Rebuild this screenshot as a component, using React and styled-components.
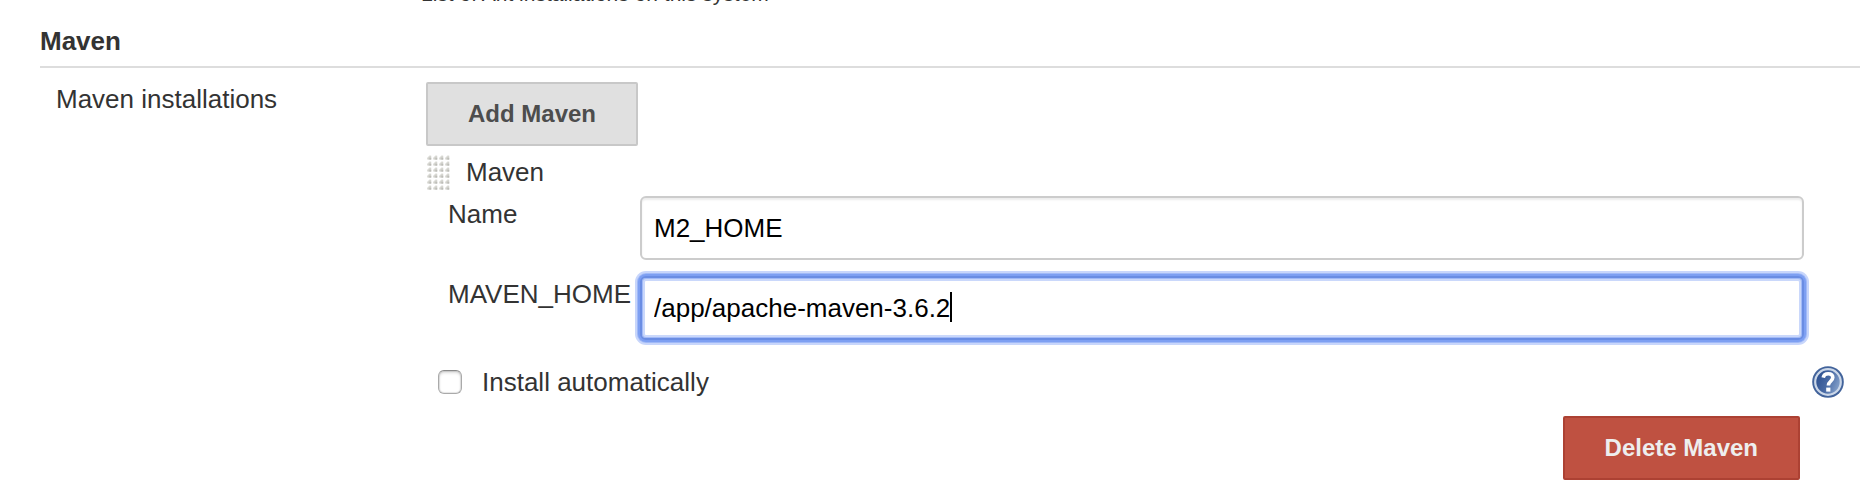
import React, { useLayoutEffect, useRef, useState } from 'react';
import styled, { createGlobalStyle, css } from 'styled-components';

const GlobalStyle = createGlobalStyle`
  * {
    box-sizing: border-box;
  }

  body {
    margin: 0;
    background-color: #fff;
    color: #333;
    font-family: "Liberation Sans", Arial, sans-serif;
    font-size: 26px;
    line-height: 30px;
    overflow-x: hidden;
  }
`;

const Page = styled.main`
  display: flow-root;
  padding: 0 0 20px 40px;
`;

/* Tail of the previous section, mostly scrolled out of view */
const Description = styled.p`
  margin: -18px 0 0 381px;
  font-size: 21px;
  line-height: 24px;
`;

const SectionTitle = styled.h2`
  margin: 20px 0 14px;
  padding-bottom: 10px;
  border-bottom: 2px solid #ddd;
  font-size: 26px;
  line-height: 30px;
`;

const Section = styled.div`
  display: grid;
  grid-template-columns: 370px minmax(0, 1fr);
  padding-left: 16px;
`;

const SectionLabel = styled.div`
  padding-top: 2px;
`;

const Button = styled.button`
  height: 64px;
  padding: 0 40px;
  border: 2px solid ${({ $danger }) => ($danger ? '#ac4133' : '#c8c8c8')};
  border-radius: 2px;
  background-color: ${({ $danger }) => ($danger ? '#bf5141' : '#e0e0e0')};
  color: ${({ $danger }) => ($danger ? '#eee' : '#4d4d4d')};
  font-family: inherit;
  font-size: 24px;
  font-weight: bold;
  cursor: pointer;
`;

const ItemHeader = styled.div`
  display: flex;
  align-items: center;
  gap: 16px;
  height: 36px;
  margin: 8px 0 6px;
`;

const Handle = styled.svg`
  display: block;
  width: 24px;
  height: 36px;
  cursor: move;
`;

const Fields = styled.div`
  display: flex;
  flex-direction: column;
  gap: 16px;
  padding: 0 56px 0 22px;
`;

const FieldRow = styled.div`
  display: grid;
  grid-template-columns: 192px minmax(0, 1fr);
`;

const Label = styled.label`
  padding-top: 3px;
`;

const InputWrap = styled.div`
  position: relative;
`;

const Input = styled.input`
  display: block;
  width: 100%;
  height: 64px;
  padding: 0 12px;
  border: 2px solid #ccc;
  border-radius: 6px;
  background-color: #fff;
  box-shadow: inset 0 2px 2px rgba(0, 0, 0, 0.075);
  color: #000;
  font-family: inherit;
  font-size: 26px;
  outline: none;

  ${({ $active }) =>
    $active &&
    css`
      border-color: #6a8de3;
      box-shadow: inset 0 0 0 1px #a2baf7, inset 0 0 0 3px #cad8fb, 0 0 0 2px #7d9ff2,
        0 0 0 3px #a0b9f7, 0 0 0 5px #c8d6fb;
      caret-color: transparent;
    `}
`;

const Caret = styled.span`
  position: absolute;
  top: 16px;
  width: 2px;
  height: 30px;
  background-color: #000;
  pointer-events: none;
`;

const OptionRow = styled.div`
  display: flex;
  align-items: center;
  justify-content: space-between;
  height: 32px;
  margin: 26px 16px 18px 12px;
`;

const OptionLabel = styled.label`
  display: flex;
  align-items: center;
  gap: 20px;
`;

const Checkbox = styled.input`
  appearance: none;
  width: 24px;
  height: 24px;
  margin: 0;
  border: 1px solid #aaa;
  border-top-color: #8a8a8a;
  border-radius: 6px;
  background-color: #fff;
  box-shadow: inset 0 2px 3px rgba(0, 0, 0, 0.14), inset 0 0 1px 1px rgba(0, 0, 0, 0.1);

  &:checked {
    background-color: #6a8de3;
  }
`;

const HelpLink = styled.a`
  display: block;
  width: 32px;
  height: 32px;

  svg {
    display: block;
  }
`;

const Actions = styled.div`
  display: flex;
  justify-content: flex-end;
  padding-right: 60px;
`;

const DragHandle = () => (
  <Handle viewBox="0 0 24 36" aria-hidden="true">
    <defs>
      <pattern id="grip" width="6" height="6" patternUnits="userSpaceOnUse">
        <path d="M1 5.6 L1 4 L3.4 1.6 L5.2 1.6 L5.2 5.6 Z" fill="#deded9" />
        <path d="M2.2 5.6 L2.2 4 L3.8 2.4 L5.2 2.4 L5.2 5.6 Z" fill="#cfcfca" />
        <path d="M3.4 4 H5.2 V5.6 H3.4 Z" fill="#bdbdb8" />
      </pattern>
    </defs>
    <rect width="24" height="36" fill="url(#grip)" />
  </Handle>
);

const HelpIcon = () => (
  <svg width="32" height="32" viewBox="0 0 32 32" aria-hidden="true">
    <defs>
      <linearGradient id="helpFill" x1="0" y1="0.3" x2="1" y2="0.7">
        <stop offset="0" stopColor="#2c4f8f" />
        <stop offset="0.5" stopColor="#4a6ba5" />
        <stop offset="1" stopColor="#8ba7cf" />
      </linearGradient>
    </defs>
    <circle cx="16" cy="16" r="15.8" fill="#42639b" />
    <circle cx="16" cy="16" r="12.8" fill="url(#helpFill)" stroke="#cbd7e8" strokeWidth="2.2" />
    <path
      d="M11.2 11.6 C11.8 8.6 13.8 7.8 16.2 7.8 C19 7.8 20.8 9.2 20.8 11.6 C20.8 15.2 16.4 15.4 16.4 19.4"
      fill="none"
      stroke="#fff"
      strokeWidth="3.6"
    />
    <rect x="14.2" y="21.6" width="4.2" height="4" fill="#fff" />
  </svg>
);

const TextField = ({ id, label, initialValue, active }) => {
  const [value, setValue] = useState(initialValue);
  const [caretLeft, setCaretLeft] = useState(0);
  const inputRef = useRef(null);

  // keep the caret right behind the last character
  useLayoutEffect(() => {
    const style = window.getComputedStyle(inputRef.current);
    const ctx = document.createElement('canvas').getContext('2d');
    ctx.font = `${style.fontSize} ${style.fontFamily}`;
    const start = parseInt(style.paddingLeft, 10) + parseInt(style.borderLeftWidth, 10);
    setCaretLeft(Math.round(start + ctx.measureText(value).width));
  }, [value]);

  return (
    <FieldRow>
      <Label htmlFor={id}>{label}</Label>
      <InputWrap>
        <Input
          ref={inputRef}
          id={id}
          type="text"
          value={value}
          onChange={(e) => setValue(e.target.value)}
          $active={active}
        />
        {active && <Caret style={{ left: caretLeft }} />}
      </InputWrap>
    </FieldRow>
  );
};

const App = () => {
  const [autoInstall, setAutoInstall] = useState(false);

  return (
    <>
      <GlobalStyle />
      <Page>
        <Description>List of Ant installations on this system</Description>
        <SectionTitle>Maven</SectionTitle>
        <Section>
          <SectionLabel>Maven installations</SectionLabel>
          <div>
            <Button type="button">Add Maven</Button>
            <ItemHeader>
              <DragHandle />
              <span>Maven</span>
            </ItemHeader>
            <Fields>
              <TextField id="name" label="Name" initialValue="M2_HOME" />
              <TextField
                id="home"
                label="MAVEN_HOME"
                initialValue="/app/apache-maven-3.6.2"
                active
              />
            </Fields>
            <OptionRow>
              <OptionLabel>
                <Checkbox
                  type="checkbox"
                  checked={autoInstall}
                  onChange={(e) => setAutoInstall(e.target.checked)}
                />
                <span>Install automatically</span>
              </OptionLabel>
              <HelpLink href="#help" aria-label="Help">
                <HelpIcon />
              </HelpLink>
            </OptionRow>
            <Actions>
              <Button type="button" $danger>
                Delete Maven
              </Button>
            </Actions>
          </div>
        </Section>
      </Page>
    </>
  );
};

export default App;
